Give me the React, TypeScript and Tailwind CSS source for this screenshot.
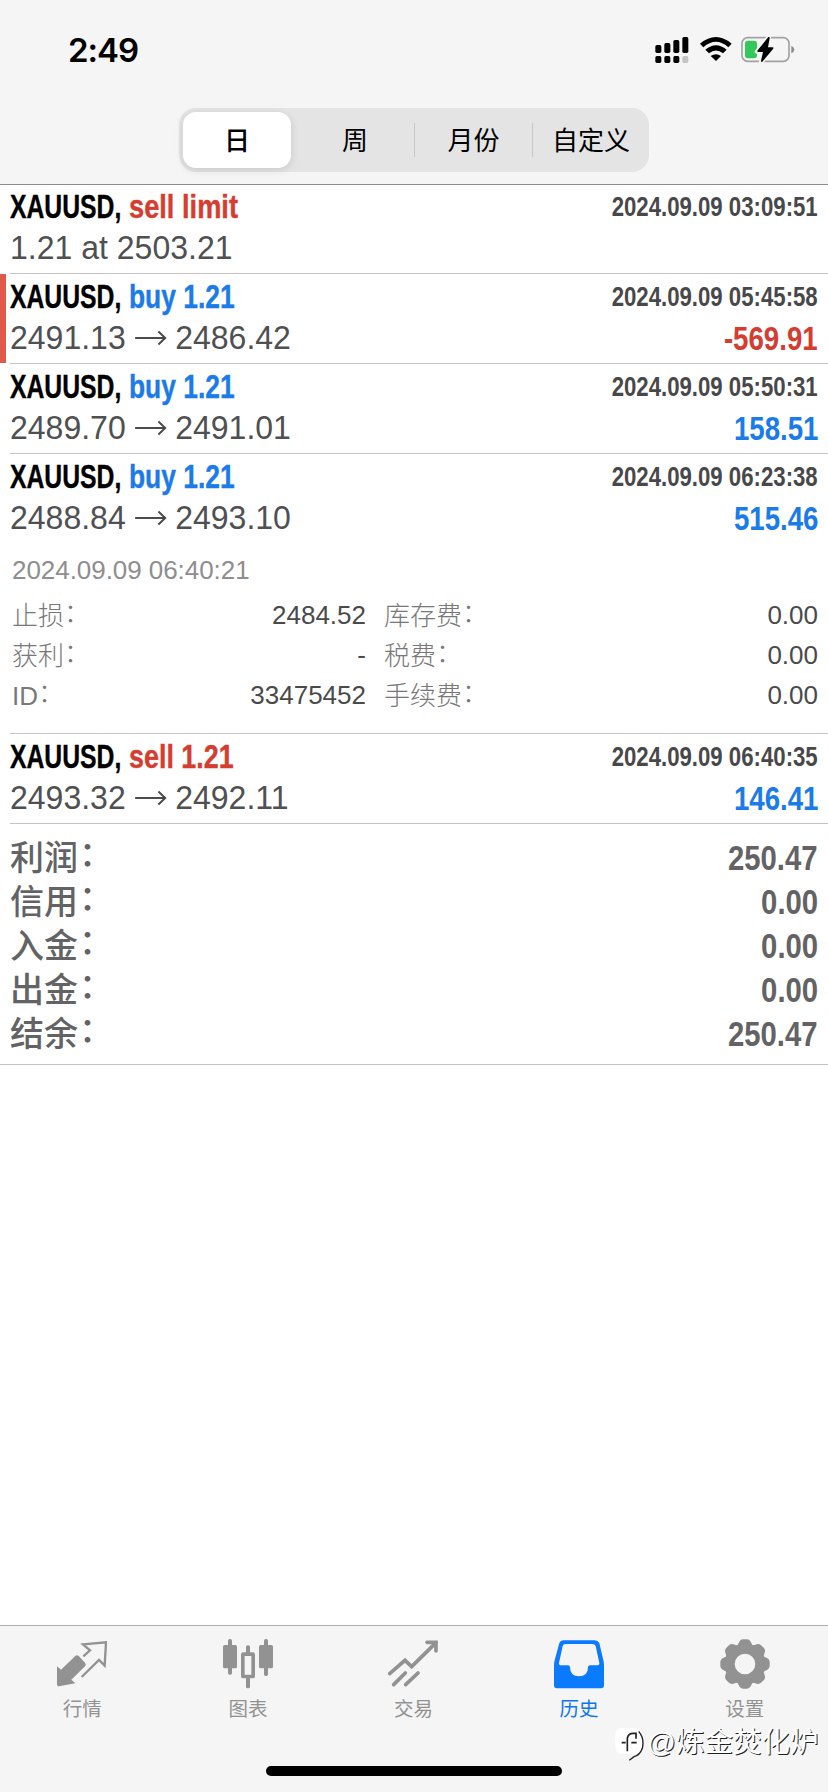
import type { ReactNode } from "react";

const SANS = "font-['Liberation_Sans','Noto_Sans_CJK_SC',sans-serif]";

type Deal = {
  action: string;
  actionClass: string;
  time: string;
  open: string;
  close?: string;
  profit?: string;
  loss?: boolean;
};

const SELL_LIMIT: Deal = {
  action: "sell limit",
  actionClass: "text-[#d43d30] scale-x-[0.813]",
  time: "2024.09.09 03:09:51",
  open: "1.21 at 2503.21",
};
const BUY = "text-[#1b7be8] scale-x-[0.788]";
const SELL = "text-[#d43d30] scale-x-[0.803]";

const DEALS: Deal[] = [
  SELL_LIMIT,
  { action: "buy 1.21", actionClass: BUY, time: "2024.09.09 05:45:58", open: "2491.13", close: "2486.42", profit: "-569.91", loss: true },
  { action: "buy 1.21", actionClass: BUY, time: "2024.09.09 05:50:31", open: "2489.70", close: "2491.01", profit: "158.51" },
];
const OPENED: Deal = { action: "buy 1.21", actionClass: BUY, time: "2024.09.09 06:23:38", open: "2488.84", close: "2493.10", profit: "515.46" };
const LAST: Deal = { action: "sell 1.21", actionClass: SELL, time: "2024.09.09 06:40:35", open: "2493.32", close: "2492.11", profit: "146.41" };

function Arrow() {
  return (
    <svg className="mr-[8px] ml-[9px] h-[20px] w-[34px]" viewBox="0 0 34 20" fill="none" stroke="#4a4a4c" strokeWidth="2">
      <path d="M1 10H32M25 3.5L32 10L25 16.5" />
    </svg>
  );
}

function DealHead({ deal }: { deal: Deal }) {
  return (
    <div className="flex h-[90px] flex-col justify-end pb-[4px]">
      <div className="flex h-[40px] items-center justify-between">
        <div className="flex text-[33.5px] leading-[40px] font-bold whitespace-nowrap [-webkit-text-stroke:0.4px_currentColor]">
          <span className="w-[118.5px] origin-left scale-x-[0.738] text-black">XAUUSD,</span>
          <span className={`origin-left ${deal.actionClass}`}>{deal.action}</span>
        </div>
        <span className="origin-right scale-x-[0.822] text-[27px] leading-[40px] font-bold whitespace-nowrap text-[#48484a]">{deal.time}</span>
      </div>
      <div className="flex h-[42px] items-center justify-between text-[33px] leading-[42px]">
        <div className="flex origin-left scale-x-[0.97] items-center whitespace-nowrap text-[#505052]">
          <span>{deal.open}</span>
          {deal.close && <Arrow />}
          {deal.close && <span>{deal.close}</span>}
        </div>
        {deal.profit && (
          <span className={`origin-right scale-x-[0.825] pt-[2px] text-[33.5px] font-bold ${deal.loss ? "text-[#d43d30]" : "text-[#1b7be8]"}`}>{deal.profit}</span>
        )}
      </div>
    </div>
  );
}

function DetailLine({ label, value }: { label: string; value: string }) {
  return (
    <div className="flex h-[40px] items-center justify-between leading-[40px]">
      <span className="flex pt-px font-light text-[#78787a]">
        {label}
        <span className="-mt-[3px]">：</span>
      </span>
      <span className="text-[#4a4a4c]">{value}</span>
    </div>
  );
}

function SummaryLine({ label, value }: { label: string; value: string }) {
  return (
    <div className="flex h-[44px] items-center justify-between leading-[44px] text-[#636365]">
      <span className="flex pt-px text-[34px] font-medium">
        {label}
        <span className="-mt-[4px] ml-px">：</span>
      </span>
      <span className="origin-right scale-x-[0.825] pt-px text-[35.5px] font-bold">{value}</span>
    </div>
  );
}

function Tab({ label, active, children }: { label: string; active?: boolean; children: ReactNode }) {
  return (
    <div className={`flex flex-1 flex-col items-center pt-[13px] pr-px ${active ? "text-[#0f76f0]" : "text-[#929292]"}`}>
      <div className="h-[50px] w-[50px]">{children}</div>
      <span className="mt-[6px] text-[19.5px] leading-[28px]">{label}</span>
    </div>
  );
}

const TEETH = [0, 45, 90, 135, 180, 225, 270, 315];

export default function App() {
  return (
    <div className={`relative flex h-[1792px] w-[828px] flex-col overflow-hidden bg-white ${SANS}`}>
      <header className="flex h-[185px] flex-col border-b border-[#8a8a8c] bg-[#f5f5f5]">
        <div className="flex h-[108px] items-start justify-between pr-[33px] pl-[68px]">
          <span className="mt-[30px] font-['Inter',sans-serif] text-[33px] leading-[40px] font-semibold tracking-[-1px] text-black">2:49</span>
          <div className="mt-[36px] flex">
            <svg className="h-[28px] w-[34px]" viewBox="722 108 102 84">
              <rect x="723" y="135" width="18" height="24" rx="5" />
              <rect x="750" y="129" width="18" height="30" rx="5" />
              <rect x="777" y="120" width="18" height="39" rx="5" />
              <rect x="804" y="111" width="18" height="48" rx="5" />
              <rect x="723" y="168" width="18" height="21" rx="5" />
              <rect x="750" y="168" width="18" height="21" rx="5" />
              <rect x="777" y="168" width="18" height="21" rx="5" />
              <rect x="804" y="168" width="18" height="21" rx="5" fill="#c4c4c6" />
            </svg>
            <svg className="ml-[10px] h-[28px] w-[34px]" viewBox="854 108 102 84">
              <path d="M857 131Q905 91 952 131L942 142Q905 109 867 142Z" />
              <path d="M873 149Q905 122 937 149L926 160Q905 143 884 160Z" />
              <path d="M889 168Q905 158 920 168L905 183Z" />
            </svg>
            <svg className="ml-[8px] h-[28px] w-[54px]" viewBox="980 108 162 84">
              <rect x="983" y="113" width="141" height="71" rx="17" fill="none" stroke="#a2a2a4" strokeWidth="5" />
              <path d="M1131 137Q1140 141 1140 148.500Q1140 156 1131 160Z" fill="#8e8e90" />
              <rect x="992" y="122" width="36" height="53" rx="9" fill="#34c759" />
              <path d="M1065 108L1027 155H1046L1039 189L1079 143H1058Z" stroke="#f5f5f5" strokeWidth="12" strokeLinejoin="round" />
              <path d="M1062 111Q1067 110 1066 115L1061 142H1075Q1079 143 1076 147L1044 185Q1039 187 1040 182L1046 156H1032Q1027 155 1030 151Z" />
            </svg>
          </div>
        </div>
        <div className="mx-auto flex h-[64px] w-[470px] items-center rounded-[17px] bg-[#e4e4e5] text-[26px] leading-[36px] text-black">
          <div className="flex h-full w-[117px] items-center pl-[4px]">
            <div className="flex h-[56px] w-[108px] items-center justify-center rounded-[13px] bg-white pt-px font-medium shadow-[0_2px_8px_rgba(0,0,0,0.12)]">日</div>
          </div>
          <div className="w-[118px] pt-px text-center">周</div>
          <div className="h-[34px] w-px bg-[#c6c6c8]" />
          <div className="w-[117px] pt-px text-center">月份</div>
          <div className="h-[34px] w-px bg-[#c6c6c8]" />
          <div className="w-[116px] pt-px text-center">自定义</div>
        </div>
      </header>

      <main className="flex flex-1 flex-col">
        {DEALS.map((deal, i) => (
          <div key={deal.time} className={`flex ${i === 0 ? "h-[89px] items-end" : "h-[90px]"}`}>
            <div className={`w-[6px] shrink-0 ${deal.loss ? "h-[89px] bg-[#e05a4c]" : ""}`} />
            <div className="ml-[4px] flex h-full flex-1 flex-col justify-end border-b border-[#c4c4c6] pr-[10px]">
              <DealHead deal={deal} />
            </div>
          </div>
        ))}
        <div className="ml-[10px] flex h-[280px] flex-col border-b border-[#c4c4c6] pr-[10px]">
          <div className="flex h-[89px] flex-col justify-end">
            <DealHead deal={OPENED} />
          </div>
          <div className="flex flex-col pt-[7px] pl-[2px] text-[26px]">
            <div className="h-[45px] leading-[40px] tracking-[-0.05px] text-[#8e8e90]">2024.09.09 06:40:21</div>
            <div className="flex justify-between">
              <div className="w-[354px]">
                <DetailLine label="止损" value="2484.52" />
                <DetailLine label="获利" value="-" />
                <DetailLine label="ID" value="33475452" />
              </div>
              <div className="w-[434px]">
                <DetailLine label="库存费" value="0.00" />
                <DetailLine label="税费" value="0.00" />
                <DetailLine label="手续费" value="0.00" />
              </div>
            </div>
          </div>
        </div>
        <div className="ml-[10px] flex h-[90px] flex-col justify-end border-b border-[#c4c4c6] pr-[10px]">
          <DealHead deal={LAST} />
        </div>
        <div className="h-[241px] border-b border-[#c4c4c6] px-[10px] pt-[11px]">
          <SummaryLine label="利润" value="250.47" />
          <SummaryLine label="信用" value="0.00" />
          <SummaryLine label="入金" value="0.00" />
          <SummaryLine label="出金" value="0.00" />
          <SummaryLine label="结余" value="250.47" />
        </div>
      </main>

      <footer className="flex h-[167px] flex-col border-t border-[#b0b0b2] bg-[#f5f5f5]">
        <nav className="flex h-[140px]">
          <Tab label="行情">
            <svg className="h-full w-full" viewBox="171 86 150 150">
              <path d="M250 138L270 120L249 102L318 96L314 166L297 149L245 200" fill="none" stroke="currentColor" strokeWidth="7" />
              <path d="M171 168L183 178L225 138Q231 132 237 138L255 157Q260 162 255 168L214 208L226 219L177 228Q171 229 171 222Z" fill="currentColor" />
            </svg>
          </Tab>
          <Tab label="图表">
            <svg className="h-full w-full" viewBox="669 86 150 150" fill="currentColor">
              <rect x="669" y="104" width="42" height="70" rx="5" />
              <rect x="684" y="86" width="12" height="107" rx="5" />
              <rect x="777" y="104" width="42" height="70" rx="5" />
              <rect x="792" y="86" width="12" height="111" rx="5" />
              <rect x="728.500" y="131.500" width="31" height="67" rx="1" fill="none" stroke="currentColor" strokeWidth="11" />
              <rect x="738" y="105" width="12" height="26" rx="5" />
              <rect x="738" y="200" width="12" height="34" rx="5" />
            </svg>
          </Tab>
          <Tab label="交易">
            <svg className="h-full w-full" viewBox="264 86 150 150" fill="none" stroke="currentColor" strokeWidth="11" strokeLinecap="round">
              <path d="M269 190L315 150L335 169L408 97" />
              <path d="M381 96H408V122" />
              <path d="M281 223L316 188M317 223L354 188" />
            </svg>
          </Tab>
          <Tab label="历史" active>
            <svg className="h-full w-full" viewBox="759 86 150 150" fill="#0a7aff" fillRule="evenodd">
              <path d="M787 90H881Q891 90 895 98L907 150Q909 158 909 166V225Q909 234 900 234H768Q759 234 759 225V166Q759 158 761 150L775 98Q778 90 787 90ZM793 101Q787 101 785 107L774 158Q773 165 781 165H801Q807 165 807 171Q807 198 834 198Q861 198 861 171Q861 165 867 165H888Q896 165 895 158L884 107Q881 101 875 101Z" />
            </svg>
          </Tab>
          <Tab label="设置">
            <svg className="h-full w-full" viewBox="477 86 150 150" fill="currentColor">
              {TEETH.map((a) => (
                <path key={a} d="M525 113L535 94Q539 87 546 87H558Q565 87 569 94L579 113Z" transform={`rotate(${a} 552 161)`} />
              ))}
              <circle cx="552" cy="161" r="46" fill="none" stroke="currentColor" strokeWidth="30" />
            </svg>
          </Tab>
        </nav>
        <div className="mx-auto h-[10px] w-[296px] rounded-full bg-black" />
      </footer>

      <div className="absolute top-[1721px] left-[615px] flex items-center">
        <svg className="mt-[5px] h-[36px] w-[30px]" viewBox="165 348 90 108">
          <rect x="166" y="354" width="80" height="78" rx="20" fill="#fff" />
          <path d="M236 364Q254 385 247 415Q239 437 222 440L208 451" fill="none" stroke="#222" strokeWidth="4" />
          <path d="M185 398H197M214 398H230M202 424V385Q204 370 220 370H228V386" fill="none" stroke="#222" strokeWidth="5" />
        </svg>
        <span className="ml-[2px] text-[28.5px] leading-[40px] whitespace-nowrap text-white [text-shadow:1px_1px_0_rgba(0,0,0,0.9)]">@炼金焚化炉</span>
      </div>
    </div>
  );
}
